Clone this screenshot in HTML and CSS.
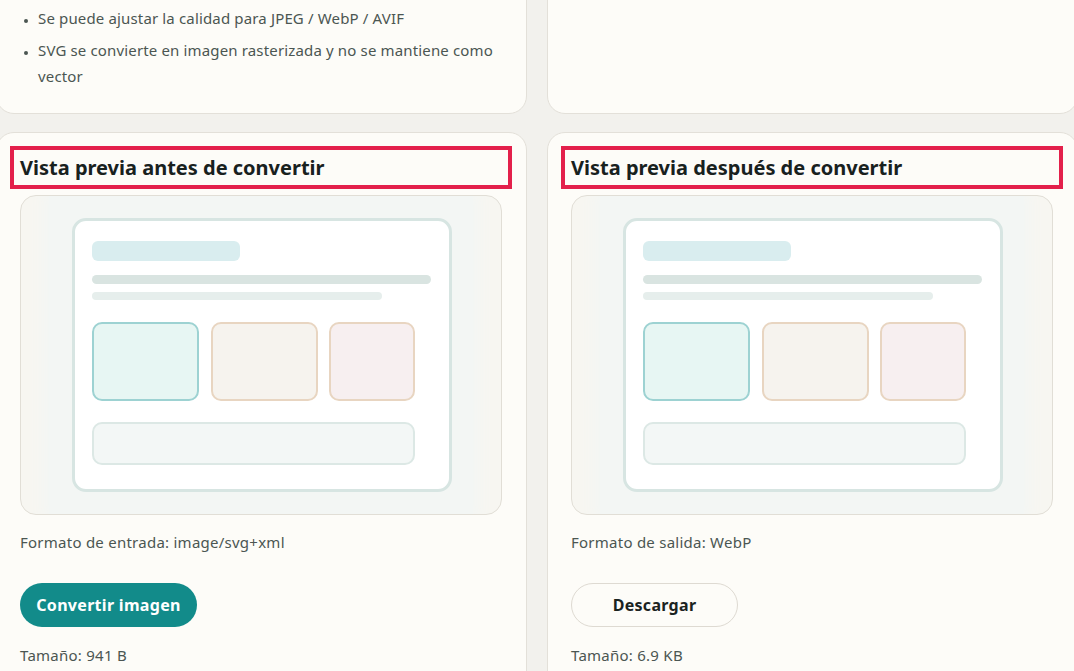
FILE: index.html
```html
<!DOCTYPE html>
<html lang="es">
<head>
<meta charset="utf-8">
<title>Conversor de imágenes</title>
<link rel="stylesheet" href="styles.css">
</head>
<body>
<main class="grid">
  <section class="card info">
    <ul class="notes">
      <li>Se puede ajustar la calidad para JPEG / WebP / AVIF</li>
      <li>SVG se convierte en imagen rasterizada y no se mantiene como vector</li>
    </ul>
  </section>
  <section class="card info"></section>

  <section class="card">
    <h2 class="title">Vista previa antes de convertir</h2>
    <div class="preview">
      <div class="shot">
        <div class="mock">
          <div class="pill"></div>
          <div class="line l1"></div>
          <div class="line l2"></div>
          <div class="tiles">
            <div class="tile t1"></div>
            <div class="tile t2"></div>
            <div class="tile t3"></div>
          </div>
          <div class="bar"></div>
        </div>
      </div>
    </div>
    <p class="meta">Formato de entrada: image/svg+xml</p>
    <button class="btn primary">Convertir imagen</button>
    <p class="size">Tamaño: 941 B</p>
  </section>

  <section class="card">
    <h2 class="title">Vista previa después de convertir</h2>
    <div class="preview">
      <div class="shot">
        <div class="mock">
          <div class="pill"></div>
          <div class="line l1"></div>
          <div class="line l2"></div>
          <div class="tiles">
            <div class="tile t1"></div>
            <div class="tile t2"></div>
            <div class="tile t3"></div>
          </div>
          <div class="bar"></div>
        </div>
      </div>
    </div>
    <p class="meta">Formato de salida: WebP</p>
    <button class="btn ghost">Descargar</button>
    <p class="size">Tamaño: 6.9 KB</p>
  </section>
</main>
</body>
</html>
```

FILE: styles.css
```css
html, body {
  margin: 0;
  padding: 0;
  overflow: hidden;
  background: #f2f1ed;
}
body {
  font-family: "Noto Sans", "Liberation Sans", Arial, sans-serif;
  color: #4b5652;
}
.grid {
  width: 1082px;
  margin: -19px 0 0 -4px;
  display: grid;
  grid-template-columns: 1fr 1fr;
  column-gap: 20px;
  row-gap: 18px;
}
.card {
  background: #fdfcf8;
  border: 1px solid #e3e0d9;
  border-radius: 18px;
  padding: 23px 24px 24px 23px;
  box-sizing: border-box;
}
.notes {
  margin: 0;
  padding-left: 18px;
  font-size: 15px;
  letter-spacing: 0.15px;
  line-height: 26px;
}
.notes li + li {
  margin-top: 6px;
}
.notes li::marker {
  font-size: 10px;
}
.title {
  margin: 0 0 16px;
  font-size: 20px;
  line-height: 23px;
  font-weight: 700;
  color: #18211e;
  outline: 4px solid #e3204b;
  outline-offset: 6px;
}
.preview {
  height: 320px;
  box-sizing: border-box;
  border: 1px solid #e1ded6;
  border-radius: 16px;
  background: #f7f6f1;
  display: flex;
  justify-content: center;
  overflow: hidden;
}
.shot {
  width: 424px;
  height: 318px;
  box-sizing: border-box;
  padding: 22px 21px 22px 23px;
  background: #f3f6f4;
  box-shadow: 0 0 14px 6px #f3f6f4;
}
.mock {
  height: 274px;
  box-sizing: border-box;
  background: #ffffff;
  border: 3px solid #d7e5e2;
  border-radius: 14px;
  padding: 20px 18px 0 17px;
}
.pill {
  width: 148px;
  height: 20px;
  border-radius: 6px;
  background: #d9edef;
}
.line {
  height: 9px;
  border-radius: 5px;
  background: #d9e4e1;
}
.l1 { margin-top: 14px; width: 339px; }
.l2 { margin-top: 8px; width: 290px; height: 8px; background: #e6eeec; }
.tiles {
  margin-top: 22px;
  display: flex;
  gap: 11px;
}
.tile {
  height: 79px;
  box-sizing: border-box;
  border: 2px solid #e8d5c1;
  border-radius: 10px;
}
.t1 { width: 107px; background: #e7f6f3; border-color: #9dd2d2; }
.t2 { width: 107px; background: #f6f3ee; margin-left: 1px; }
.t3 { width: 86px; background: #f7eff0; }
.bar {
  margin-top: 21px;
  width: 323px;
  height: 43px;
  box-sizing: border-box;
  border: 2px solid #dce8e5;
  border-radius: 10px;
  background: #f3f7f6;
}
.meta, .size {
  margin: 16px 0 0;
  font-size: 15px;
  letter-spacing: 0.25px;
  line-height: 22px;
  color: #4b5652;
}
.btn {
  display: block;
  margin-top: 30px;
  height: 44px;
  border-radius: 22px;
  font-family: "Noto Sans", "Liberation Sans", Arial, sans-serif;
  font-size: 16px;
  font-weight: 700;
  letter-spacing: 0.3px;
  padding: 0 10px;
  cursor: pointer;
}
.primary {
  background: #128b8a;
  color: #ffffff;
  border: none;
  width: 177px;
}
.ghost {
  background: #fdfcf8;
  color: #1b231f;
  border: 1px solid #dedad2;
  width: 167px;
}
.size {
  margin-top: 17px;
}
```
